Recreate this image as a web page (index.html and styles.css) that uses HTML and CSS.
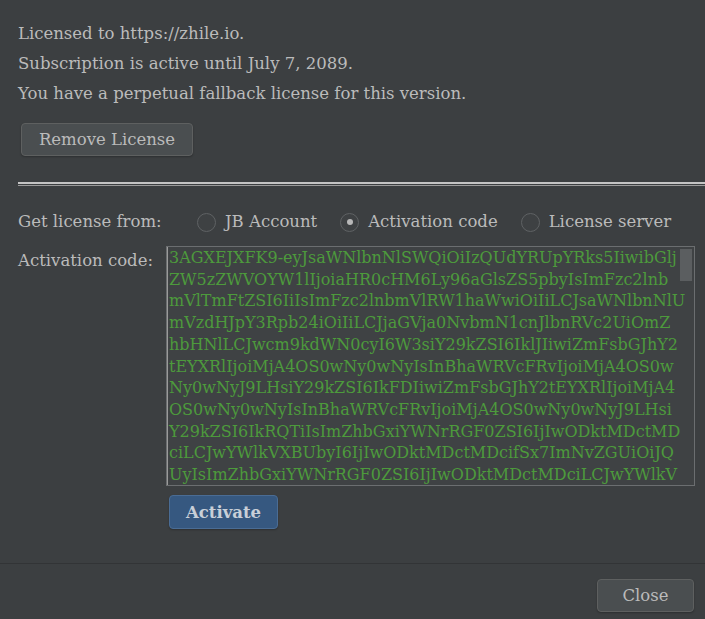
FILE: index.html
```html
<!DOCTYPE html>
<html lang="en">
<head>
  <meta charset="UTF-8" />
  <title>License Activation</title>
  <link rel="stylesheet" href="styles.css">
</head>
<body>
  <div class="dialog">
    <div class="info">
      <p>Licensed to https://zhile.io.</p>
      <p>Subscription is active until July 7, 2089.</p>
      <p>You have a perpetual fallback license for this version.</p>
      <button class="btn remove">Remove License</button>
    </div>

    <div class="separator"></div>

    <div class="form">
      <span class="label">Get license from:</span>
      <div class="radios">
        <label class="radio"><span class="dot"></span>JB Account</label>
        <label class="radio checked"><span class="dot"></span>Activation code</label>
        <label class="radio"><span class="dot"></span>License server</label>
      </div>

      <span class="label">Activation code:</span>
      <div class="code-box">
        <div class="code">3AGXEJXFK9-eyJsaWNlbnNlSWQiOiIzQUdYRUpYRks5IiwibGlj
ZW5zZWVOYW1lIjoiaHR0cHM6Ly96aGlsZS5pbyIsImFzc2lnb
mVlTmFtZSI6IiIsImFzc2lnbmVlRW1haWwiOiIiLCJsaWNlbnNlU
mVzdHJpY3Rpb24iOiIiLCJjaGVja0NvbmN1cnJlbnRVc2UiOmZ
hbHNlLCJwcm9kdWN0cyI6W3siY29kZSI6IklJIiwiZmFsbGJhY2
tEYXRlIjoiMjA4OS0wNy0wNyIsInBhaWRVcFRvIjoiMjA4OS0w
Ny0wNyJ9LHsiY29kZSI6IkFDIiwiZmFsbGJhY2tEYXRlIjoiMjA4
OS0wNy0wNyIsInBhaWRVcFRvIjoiMjA4OS0wNy0wNyJ9LHsi
Y29kZSI6IkRQTiIsImZhbGxiYWNrRGF0ZSI6IjIwODktMDctMD
ciLCJwYWlkVXBUbyI6IjIwODktMDctMDcifSx7ImNvZGUiOiJQ
UyIsImZhbGxiYWNrRGF0ZSI6IjIwODktMDctMDciLCJwYWlkV</div>
        <div class="scrollbar"><div class="thumb"></div></div>
      </div>

      <span></span>
      <div><button class="btn activate">Activate</button></div>
    </div>

    <div class="footer">
      <button class="btn close">Close</button>
    </div>
  </div>
</body>
</html>
```

FILE: styles.css
```css
body {
  margin: 0;
  background-color: #3c3f41;
  color: #bbbbbb;
  font-family: "DejaVu Serif", "Liberation Serif", serif;
  font-size: 16.5px;
}
.dialog {
  width: 705px;
  height: 619px;
  display: flex;
  flex-direction: column;
}
.info {
  padding: 19px 0 0 18px;
}
.info p {
  margin: 0;
  line-height: 30px;
  white-space: nowrap;
}
.btn {
  font-family: inherit;
  font-size: 16.5px;
  color: #bbbbbb;
  background-color: #4a4e50;
  border: 1px solid #5e6060;
  border-radius: 4px;
  height: 33px;
  padding: 0 12px;
  box-shadow: 0 1px 2px rgba(0, 0, 0, 0.25);
}
.remove {
  margin: 14px 0 0 3px;
  width: 172px;
}
.separator {
  margin: 26px 0 0 18px;
  height: 1px;
  border-top: 2px solid #c4c4c4;
  border-bottom: 1px solid #9a9a9a;
}
.form {
  display: grid;
  grid-template-columns: 148px 529px;
  padding: 21px 0 0 18px;
  row-gap: 9px;
}
.label {
  line-height: 30px;
  white-space: nowrap;
}
.radios {
  display: flex;
  gap: 23px;
  padding-left: 31px;
  line-height: 30px;
}
.radio {
  display: flex;
  align-items: center;
  gap: 9px;
  white-space: nowrap;
}
.dot {
  width: 17px;
  height: 17px;
  border: 1px solid #5f6264;
  border-radius: 50%;
  background-color: #3e4143;
  display: flex;
  align-items: center;
  justify-content: center;
}
.radio.checked .dot::after {
  content: "";
  width: 6px;
  height: 6px;
  border-radius: 50%;
  background-color: #b8b8b8;
}
.code-box {
  position: relative;
  height: 238px;
  border: 1px solid #6b6e70;
  background-color: #3f4244;
  overflow: hidden;
}
.code {
  white-space: pre;
  color: #4d9a3c;
  font-size: 16px;
  line-height: 21.7px;
  padding: 0 0 0 1px;
  border-left: 1px solid #9a9a9a;
}
.scrollbar {
  position: absolute;
  top: 2px;
  right: 2px;
  width: 12px;
  bottom: 2px;
}
.thumb {
  height: 32px;
  background-color: #5b5e60;
}
.activate {
  margin: 0 0 0 3px;
  width: 109px;
  height: 34px;
  background-color: #365880;
  border-color: #4a6c94;
  font-weight: bold;
  color: #c8cfd8;
}
.footer {
  margin-top: auto;
  border-top: 1px solid #323436;
  height: 56px;
  display: flex;
  justify-content: flex-end;
  align-items: flex-start;
  padding: 15px 11px 0 0;
  box-sizing: border-box;
}
.close {
  width: 97px;
  height: 33px;
}
```
